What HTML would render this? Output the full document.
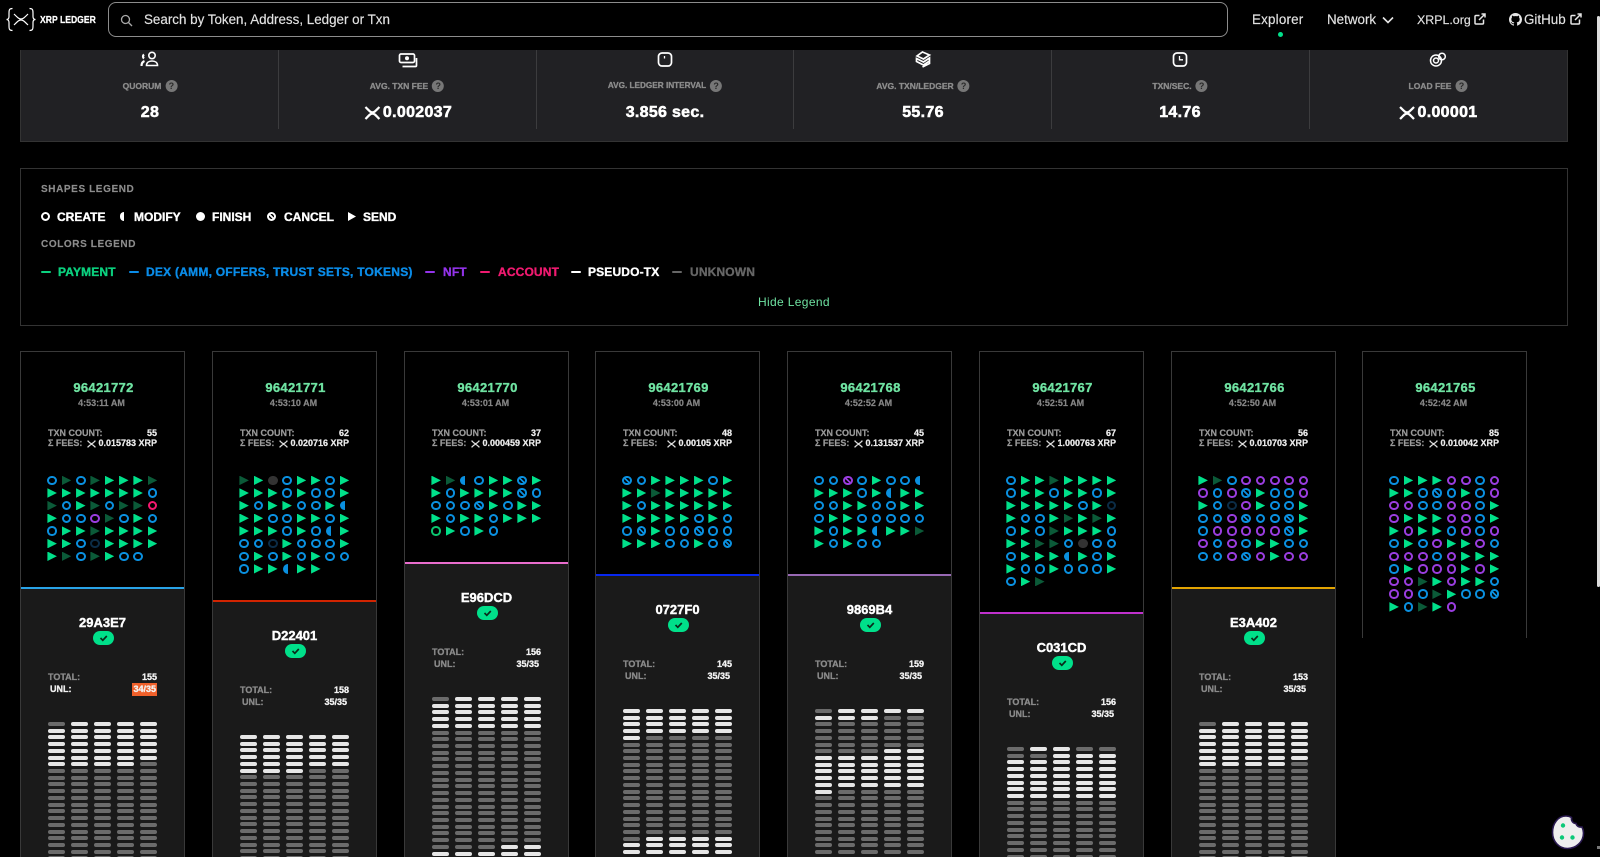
<!DOCTYPE html>
<html lang="en"><head><meta charset="utf-8"><title>XRP Ledger Explorer</title>
<style>
*{box-sizing:border-box}
html,body{margin:0;padding:0;background:#000;width:1600px;height:857px;overflow:hidden;font-family:"Liberation Sans",sans-serif;color:#fff}
#w{position:relative;width:1600px;height:857px;overflow:hidden;background:#000}
.a{position:absolute;white-space:nowrap}
#hd{position:absolute;left:0;top:0;width:1600px;height:50px;background:#000;z-index:3}
#sb{position:absolute;left:108px;top:2px;width:1120px;height:35px;border:1px solid #8c8c8c;border-radius:8px}
.nav{font-size:13.4px;line-height:16px;top:12px;color:#e2e2e2;-webkit-text-stroke:.15px #e2e2e2}
#st{position:absolute;left:20px;top:40px;width:1548px;height:102px;background:#212124;border:1px solid #333;border-top:0}
.sep{position:absolute;top:50px;width:1px;height:79px;background:#3c3c3e;z-index:1}
.lb{position:absolute;top:80px;height:12px;font-size:8.5px;font-weight:700;line-height:12px;color:#8c8c8c;display:flex;align-items:center;transform:translateX(-50%);-webkit-text-stroke:.3px #8c8c8c;white-space:nowrap}
.lb u{display:block;width:12px;height:12px;border-radius:50%;background:#777;margin-left:4px;text-decoration:none;color:#2a2a2a;font-size:9px;line-height:12px;text-align:center;-webkit-text-stroke:0}
.v{position:absolute;top:104px;height:18px;font-size:16px;line-height:18px;font-weight:700;letter-spacing:.3px;transform:translateX(-50%);display:flex;align-items:center;-webkit-text-stroke:.55px #fff;white-space:nowrap}
.v svg{margin-right:2px}
.ic{position:absolute;transform:translateX(-50%)}
#lg{position:absolute;left:20px;top:168px;width:1548px;height:158px;border:1px solid #333}
.lh{font-size:10px;line-height:12px;font-weight:700;color:#8c8c8c;letter-spacing:.6px;left:41px;-webkit-text-stroke:.15px #8c8c8c}
.lt{font-size:12px;line-height:14px;font-weight:700;-webkit-text-stroke:.35px;top:210px;color:#fff}
.lc{top:265px;letter-spacing:.15px}
.ds{position:absolute;top:271px;width:10px;height:2px;border-radius:1px}
.card{position:absolute;top:351px;width:165px;height:506px;border:1px solid #393939;border-bottom:0}
.num{position:absolute;left:2px;right:0;top:29px;text-align:center;font-size:13px;line-height:14px;font-weight:700;letter-spacing:.3px;color:#6fe3a2;-webkit-text-stroke:.35px #6fe3a2}
.tm{position:absolute;left:0;right:2px;top:45px;text-align:center;font-size:9px;line-height:12px;font-weight:700;color:#858585;-webkit-text-stroke:.2px #858585}
.k1,.k2,.r1,.r2{position:absolute;font-size:9px;line-height:11px;font-weight:700;-webkit-text-stroke:.2px}
.k1,.k2{left:27px;color:#9a9a9a}.r1,.r2{right:27px;color:#ececec;display:flex;align-items:center}
.k1,.r1{top:76px}.k2,.r2{top:86px}
.r2 svg{margin-right:2px}
.S{position:absolute;left:24px;top:122px;display:grid;grid-template-columns:repeat(8,14.33px);grid-auto-rows:12.67px;align-items:center}
.bot{position:absolute;left:0;right:0;bottom:0;background:#1a1a1a;border-top:2px solid;overflow:hidden}
.hs{position:absolute;left:0;right:0;top:26px;text-align:center;font-size:13px;line-height:15px;font-weight:700;-webkit-text-stroke:.4px #fff}
.ok{position:absolute;left:72px;top:42px;width:21px;height:14px;border-radius:7px;background:#00e08a}
.t1,.t2,.w1,.w2{position:absolute;font-size:9px;line-height:12px;font-weight:700;-webkit-text-stroke:.3px}
.t1,.t2{color:#8a8a8a}.w1,.w2{color:#f2f2f2}
.t1{left:27px;top:82px}.w1{right:27px;top:82px}
.t2{left:29px;top:94px}.w2{right:29px;top:94px}
.B{position:absolute;left:27px;display:grid;grid-template-columns:repeat(5,17px);column-gap:6.1px;row-gap:2.73px;grid-auto-rows:4px}
hr{all:unset;display:block}
.B hr{background:#6b6b6b;border-radius:2px}
.B hr.w{background:#e6e6e6}
.S hr{width:9.5px;height:9.5px;justify-self:center;box-sizing:border-box}
.b,.n,.p,.r,.e,.c,.x{border:2px solid;border-radius:50%}
.b,.c{border-color:#0a90e0}.n{border-color:#0b2c46}.p{border-color:#9a3ddf}.r{border-color:#f5186e}.e{border-color:#0bc56f}.x{border-color:#9a3ddf}
.c{background:linear-gradient(45deg,transparent 38%,#0a90e0 38% 62%,transparent 62%)}
.x{background:linear-gradient(45deg,transparent 38%,#9a3ddf 38% 62%,transparent 62%)}
.S hr.g,.S hr.d{clip-path:polygon(0 0,100% 50%,0 100%)}
.g{background:#00e08a}.d{background:#0b5a38}
.S hr.m{width:5px;border-radius:5px 0 0 5px;background:#0a90e0;transform:translateX(-2px)}
.S hr.k{background:#333;border-radius:50%}
.L{position:absolute;background:#fff}
</style></head><body><div id="w">
<svg width="0" height="0" style="position:absolute"><defs>
<symbol id="xr" viewBox="0 0 16 14"><path d="M1 1C5 5 6 6.4 8 6.4S11 5 15 1M1 13C5 9 6 7.6 8 7.6S11 9 15 13" fill="none" stroke="currentColor" stroke-width="2.2"/></symbol>
<symbol id="ex" viewBox="0 0 12 12"><path d="M5.500 2.500H2a1 1 0 0 0-1 1V10a1 1 0 0 0 1 1h6.500a1 1 0 0 0 1-1V6.500M5 7l6-6M7.500 1H11v3.500" fill="none" stroke="#e6e6e6" stroke-width="1.500"/></symbol>
</defs></svg>

<div id="hd">
<svg class="a" style="left:5px;top:7px" width="32" height="25" viewBox="0 0 32 25" fill="none" stroke="#fff" stroke-width="1.200"><path d="M7.500 1.500C4 1.500 4 3.500 4 6V9.500C4 11.500 3 12.500 1.500 12.500C3 12.500 4 13.500 4 15.500V19C4 21.500 4 23.500 7.500 23.500M24.500 1.500C28 1.500 28 3.500 28 6V9.500C28 11.500 29 12.500 30.500 12.500C29 12.500 28 13.500 28 15.500V19C28 21.500 28 23.500 24.500 23.500"/><path d="M9 7C13 11 14 12 16 12S19 11 23 7M9 18C13 14 14 13 16 13S19 14 23 18"/></svg>
<div class="a" style="left:40px;top:14px;font-size:10.5px;line-height:12px;font-weight:700;transform:scaleX(.82);transform-origin:left;-webkit-text-stroke:.25px #fff">XRP LEDGER</div>
<div id="sb"></div>
<svg class="a" style="left:120px;top:14px" width="13" height="13" viewBox="0 0 13 13" fill="none" stroke="#a8a8a8" stroke-width="1.300"><circle cx="5.500" cy="5.500" r="4"/><path d="M8.500 8.500L12 12"/></svg>
<div class="a" style="left:144px;top:12px;font-size:13.4px;line-height:16px;color:#e2e2e2;-webkit-text-stroke:.15px #e2e2e2">Search by Token, Address, Ledger or Txn</div>
<div class="a nav" style="left:1252px;letter-spacing:.2px">Explorer</div>
<div class="a" style="left:1278px;top:32px;width:5px;height:5px;border-radius:50%;background:#00e08a"></div>
<div class="a nav" style="left:1327px">Network</div>
<svg class="a" style="left:1382px;top:16px" width="12" height="8" viewBox="0 0 12 8" fill="none" stroke="#e6e6e6" stroke-width="1.600"><path d="M1 1.500l5 5 5-5"/></svg>
<div class="a nav" style="left:1417px;font-size:12.4px">XRPL.org</div>
<svg class="a" style="left:1474px;top:13px" width="12" height="12"><use href="#ex"/></svg>
<svg class="a" style="left:1509px;top:13px" width="13" height="13" viewBox="0 0 16 16" fill="#e6e6e6"><path d="M8 0C3.58 0 0 3.58 0 8c0 3.54 2.29 6.53 5.47 7.59.4.07.55-.17.55-.38 0-.19-.01-.82-.01-1.49-2.01.37-2.53-.49-2.69-.94-.09-.23-.48-.94-.82-1.13-.28-.15-.68-.52-.01-.53.63-.01 1.08.58 1.23.82.72 1.21 1.87.87 2.33.66.07-.52.28-.87.51-1.07-1.78-.2-3.64-.89-3.64-3.95 0-.87.31-1.59.82-2.15-.08-.2-.36-1.02.08-2.12 0 0 .67-.21 2.2.82.64-.18 1.32-.27 2-.27.68 0 1.36.09 2 .27 1.53-1.04 2.2-.82 2.2-.82.44 1.1.16 1.92.08 2.12.51.56.82 1.27.82 2.15 0 3.07-1.87 3.75-3.65 3.95.29.25.54.73.54 1.48 0 1.07-.01 1.93-.01 2.2 0 .21.15.46.55.38A8.013 8.013 0 0016 8c0-4.42-3.58-8-8-8z"/></svg>
<div class="a nav" style="left:1524px">GitHub</div>
<svg class="a" style="left:1570px;top:13px" width="12" height="12"><use href="#ex"/></svg>
</div>
<div class="a" style="left:1597px;top:16px;width:3px;height:571px;background:#ddd;border-radius:2px;z-index:4"></div>

<div id="st"></div>
<div class="sep" style="left:278px"></div><div class="sep" style="left:536px"></div><div class="sep" style="left:793px"></div><div class="sep" style="left:1051px"></div><div class="sep" style="left:1309px"></div>

<svg class="ic" style="left:150px;top:51px" width="19" height="16" viewBox="0 0 19 16" fill="#fff" stroke="#fff" stroke-width="1.600"><circle cx="11.500" cy="4.500" r="3.200" fill="none"/><path d="M6 14.500c0-3 2.500-4.500 5.500-4.500s5.500 1.500 5.500 4.500z" fill="none"/><path d="M1 15c0-2.500 1-4.200 3-5M3.500 7.500a2.500 2.500 0 0 1 0-4" fill="none" stroke-width="2.200"/></svg>
<svg class="ic" style="left:408px;top:53px" width="19" height="15" viewBox="0 0 19 15" fill="none" stroke="#fff" stroke-width="1.700"><rect x="1" y="1" width="15" height="8.500" rx="1.500"/><circle cx="8.500" cy="5.200" r="2" fill="#fff" stroke="none"/><path d="M18 5v7.500a1 1 0 0 1-1 1H4"/></svg>
<svg class="ic" style="left:665px;top:52px" width="16" height="15" viewBox="0 0 16 15" fill="none" stroke="#fff" stroke-width="1.700"><rect x="1.500" y="1" width="13" height="13" rx="3.500"/><path d="M7.500 4v2.500" stroke-width="1.300"/></svg>
<svg class="ic" style="left:923px;top:51px" width="17" height="17" viewBox="0 0 17 17" fill="none" stroke="#fff" stroke-width="1.700"><path d="M8 1L15 4 9 8 2.500 5zM2 7.500L9 11 15 7v3l-6 4-7-3.500zM8 16l7-3.500V10"/></svg>
<svg class="ic" style="left:1180px;top:52px" width="16" height="15" viewBox="0 0 16 15" fill="none" stroke="#fff" stroke-width="1.700"><rect x="1.500" y="1" width="13" height="13" rx="3.500"/><path d="M7.500 4v3.800H11" stroke-width="1.300"/></svg>
<svg class="ic" style="left:1438px;top:52px" width="17" height="15" viewBox="0 0 17 15" fill="none" stroke="#fff" stroke-width="1.500"><circle cx="6.500" cy="8.500" r="5.500"/><circle cx="6.500" cy="8.500" r="2.500"/><circle cx="12.500" cy="4.500" r="3.300"/></svg>

<div class="lb" style="left:150px">QUORUM<u>?</u></div>
<div class="lb" style="left:407px">AVG. TXN FEE<u>?</u></div>
<div class="lb" style="left:665px;font-size:8.2px">AVG. LEDGER INTERVAL<u>?</u></div>
<div class="lb" style="left:923px">AVG. TXN/LEDGER<u>?</u></div>
<div class="lb" style="left:1180px">TXN/SEC.<u>?</u></div>
<div class="lb" style="left:1438px">LOAD FEE<u>?</u></div>
<div class="v" style="left:150px">28</div>
<div class="v" style="left:408px"><svg width="17" height="14" color="#fff"><use href="#xr"/></svg>0.002037</div>
<div class="v" style="left:665px">3.856 sec.</div>
<div class="v" style="left:923px">55.76</div>
<div class="v" style="left:1180px">14.76</div>
<div class="v" style="left:1438px"><svg width="17" height="14" color="#fff"><use href="#xr"/></svg>0.00001</div>

<div id="lg"></div>
<div class="a lh" style="top:184px">SHAPES LEGEND</div>
<div class="L" style="left:41px;top:212px;width:9px;height:9px;border:2px solid #fff;border-radius:50%;background:none"></div>
<div class="a lt" style="left:57px">CREATE</div>
<div class="L" style="left:120px;top:212px;width:4px;height:9px;border-radius:4px 0 0 4px"></div>
<div class="a lt" style="left:134px">MODIFY</div>
<div class="L" style="left:196px;top:212px;width:9px;height:9px;border-radius:50%"></div>
<div class="a lt" style="left:212px">FINISH</div>
<div class="L" style="left:267px;top:212px;width:9px;height:9px;border:2px solid #fff;border-radius:50%;background:linear-gradient(45deg,transparent 38%,#fff 38% 62%,transparent 62%)"></div>
<div class="a lt" style="left:284px">CANCEL</div>
<div class="L" style="left:348px;top:212px;width:8px;height:9px;clip-path:polygon(0 0,100% 50%,0 100%)"></div>
<div class="a lt" style="left:363px">SEND</div>
<div class="a lh" style="top:239px">COLORS LEGEND</div>
<div class="ds" style="left:41px;background:#0bd17f"></div><div class="a lt lc" style="left:58px;color:#0bd17f">PAYMENT</div>
<div class="ds" style="left:129px;background:#0a8ce8"></div><div class="a lt lc" style="left:146px;color:#0a8ce8;letter-spacing:.24px">DEX (AMM, OFFERS, TRUST SETS, TOKENS)</div>
<div class="ds" style="left:425px;background:#9333ea"></div><div class="a lt lc" style="left:443px;color:#9333ea">NFT</div>
<div class="ds" style="left:480px;background:#f01a70"></div><div class="a lt lc" style="left:498px;color:#f01a70">ACCOUNT</div>
<div class="ds" style="left:571px;background:#fff"></div><div class="a lt lc" style="left:588px;color:#fff">PSEUDO-TX</div>
<div class="ds" style="left:672px;background:#666"></div><div class="a lt lc" style="left:690px;color:#666">UNKNOWN</div>
<div class="a" style="left:758px;top:295px;font-size:12px;line-height:14px;color:#6fe3a2;letter-spacing:.35px">Hide Legend</div>

<!-- CARD 1 -->
<div class="card" style="left:20px">
<div class="num">96421772</div><div class="tm">4:53:11 AM</div>
<div class="k1">TXN COUNT:</div><div class="r1">55</div><div class="k2">&Sigma; FEES:</div><div class="r2"><svg width="9" height="8" color="#ddd"><use href="#xr"/></svg>0.015783 XRP</div>
<div class="S">
<hr class=b><hr class=d><hr class=b><hr class=d><hr class=g><hr class=g><hr class=g><hr class=d>
<hr class=g><hr class=g><hr class=g><hr class=g><hr class=g><hr class=g><hr class=g><hr class=b>
<hr class=d><hr class=b><hr class=g><hr class=d><hr class=b><hr class=d><hr class=d><hr class=r>
<hr class=g><hr class=b><hr class=b><hr class=p><hr class=d><hr class=b><hr class=g><hr class=b>
<hr class=b><hr class=g><hr class=g><hr class=d><hr class=g><hr class=g><hr class=g><hr class=g>
<hr class=g><hr class=g><hr class=b><hr class=n><hr class=g><hr class=g><hr class=g><hr class=g>
<hr class=g><hr class=d><hr class=b><hr class=d><hr class=g><hr class=b><hr class=b>
</div>
<div class="bot" style="top:235px;border-color:#29A3E7">
<div class="hs">29A3E7</div>
<div class="ok"><svg width="21" height="14" fill="none" stroke-width="1.700"><path d="M7.500 7l2.300 2.300 4-4.300" stroke="#0a2a1a"/></svg></div>
<div class="t1">TOTAL:</div><div class="w1">155</div>
<div class="t2" style="color:#f2f2f2">UNL:</div><div class="w2" style="right:27px;background:#f0602a;padding:0 1px;height:13px">34/35</div>
<div class="B" style="top:133px">
<hr><hr class=w><hr class=w><hr class=w><hr class=w>
<hr class=w><hr class=w><hr class=w><hr class=w><hr class=w>
<hr class=w><hr class=w><hr class=w><hr class=w><hr class=w>
<hr class=w><hr class=w><hr class=w><hr class=w><hr class=w>
<hr class=w><hr class=w><hr class=w><hr class=w><hr class=w>
<hr class=w><hr class=w><hr class=w><hr class=w><hr class=w>
<hr class=w><hr class=w><hr class=w><hr class=w><hr>
<hr><hr><hr><hr><hr><hr><hr><hr><hr><hr><hr><hr><hr><hr><hr><hr><hr><hr><hr><hr><hr><hr><hr><hr><hr><hr><hr><hr><hr><hr><hr><hr><hr><hr><hr><hr><hr><hr><hr><hr><hr><hr><hr><hr><hr><hr><hr><hr><hr><hr><hr><hr><hr><hr><hr><hr><hr><hr><hr><hr><hr><hr><hr><hr><hr><hr><hr><hr><hr><hr>
</div></div></div>

<!-- CARD 2 -->
<div class="card" style="left:212px">
<div class="num">96421771</div><div class="tm">4:53:10 AM</div>
<div class="k1">TXN COUNT:</div><div class="r1">62</div><div class="k2">&Sigma; FEES:</div><div class="r2"><svg width="9" height="8" color="#ddd"><use href="#xr"/></svg>0.020716 XRP</div>
<div class="S">
<hr class=d><hr class=g><hr class=k><hr class=b><hr class=g><hr class=g><hr class=b><hr class=g>
<hr class=g><hr class=g><hr class=g><hr class=b><hr class=g><hr class=b><hr class=b><hr class=g>
<hr class=g><hr class=b><hr class=g><hr class=g><hr class=b><hr class=b><hr class=g><hr class=m>
<hr class=g><hr class=g><hr class=b><hr class=b><hr class=g><hr class=g><hr class=b><hr class=g>
<hr class=g><hr class=g><hr class=g><hr class=b><hr class=g><hr class=b><hr class=m><hr class=g>
<hr class=b><hr class=b><hr class=n><hr class=g><hr class=b><hr class=b><hr class=b><hr class=g>
<hr class=b><hr class=g><hr class=b><hr class=g><hr class=b><hr class=g><hr class=b><hr class=b>
<hr class=b><hr class=g><hr class=g><hr class=m><hr class=g><hr class=g>
</div>
<div class="bot" style="top:248px;border-color:#D22401">
<div class="hs">D22401</div>
<div class="ok"><svg width="21" height="14" fill="none" stroke-width="1.700"><path d="M7.500 7l2.300 2.300 4-4.300" stroke="#0a2a1a"/></svg></div>
<div class="t1">TOTAL:</div><div class="w1">158</div>
<div class="t2">UNL:</div><div class="w2">35/35</div>
<div class="B" style="top:133px">
<hr class=w><hr class=w><hr class=w><hr class=w><hr class=w>
<hr class=w><hr class=w><hr class=w><hr class=w><hr class=w>
<hr class=w><hr class=w><hr class=w><hr class=w><hr class=w>
<hr class=w><hr class=w><hr class=w><hr class=w><hr class=w>
<hr class=w><hr class=w><hr class=w><hr class=w><hr class=w>
<hr class=w><hr class=w><hr class=w><hr><hr>
<hr><hr><hr><hr><hr><hr><hr><hr><hr><hr><hr><hr><hr><hr><hr><hr><hr><hr><hr><hr><hr><hr><hr><hr><hr><hr><hr><hr><hr><hr><hr><hr><hr><hr><hr><hr><hr><hr><hr><hr><hr><hr><hr><hr><hr><hr><hr><hr><hr><hr><hr><hr><hr><hr><hr><hr><hr><hr><hr><hr><hr><hr><hr><hr><hr><hr><hr><hr><hr><hr>
</div></div></div>

<!-- CARD 3 -->
<div class="card" style="left:404px">
<div class="num">96421770</div><div class="tm">4:53:01 AM</div>
<div class="k1">TXN COUNT:</div><div class="r1">37</div><div class="k2">&Sigma; FEES:</div><div class="r2"><svg width="9" height="8" color="#ddd"><use href="#xr"/></svg>0.000459 XRP</div>
<div class="S">
<hr class=g><hr class=d><hr class=m><hr class=b><hr class=g><hr class=g><hr class=c><hr class=g>
<hr class=g><hr class=b><hr class=g><hr class=g><hr class=g><hr class=g><hr class=c><hr class=b>
<hr class=b><hr class=b><hr class=b><hr class=c><hr class=g><hr class=b><hr class=g><hr class=g>
<hr class=g><hr class=b><hr class=g><hr class=g><hr class=b><hr class=g><hr class=g><hr class=g>
<hr class=e><hr class=g><hr class=b><hr class=g><hr class=b>
</div>
<div class="bot" style="top:210px;border-color:#E96DCD">
<div class="hs">E96DCD</div>
<div class="ok"><svg width="21" height="14" fill="none" stroke-width="1.700"><path d="M7.500 7l2.300 2.300 4-4.300" stroke="#0a2a1a"/></svg></div>
<div class="t1">TOTAL:</div><div class="w1">156</div>
<div class="t2">UNL:</div><div class="w2">35/35</div>
<div class="B" style="top:133px">
<hr><hr class=w><hr class=w><hr class=w><hr class=w>
<hr class=w><hr class=w><hr class=w><hr class=w><hr class=w>
<hr class=w><hr class=w><hr class=w><hr class=w><hr class=w>
<hr class=w><hr class=w><hr class=w><hr class=w><hr class=w>
<hr class=w><hr class=w><hr class=w><hr class=w><hr class=w>
<hr><hr><hr><hr><hr><hr><hr><hr><hr><hr><hr><hr><hr><hr><hr><hr><hr><hr><hr><hr><hr><hr><hr><hr><hr>
<hr><hr><hr><hr><hr><hr><hr><hr><hr><hr><hr><hr><hr><hr><hr><hr><hr><hr><hr><hr><hr><hr><hr><hr><hr>
<hr><hr><hr><hr><hr><hr><hr><hr><hr><hr><hr><hr><hr><hr><hr>
<hr><hr><hr><hr><hr><hr><hr><hr><hr><hr>
<hr><hr><hr><hr><hr><hr><hr><hr><hr><hr>
<hr><hr><hr><hr class=w><hr class=w>
<hr class=w><hr class=w><hr class=w><hr class=w><hr class=w>
</div></div></div>

<!-- CARD 4 -->
<div class="card" style="left:595px">
<div class="num">96421769</div><div class="tm">4:53:00 AM</div>
<div class="k1">TXN COUNT:</div><div class="r1">48</div><div class="k2">&Sigma; FEES:</div><div class="r2"><svg width="9" height="8" color="#ddd"><use href="#xr"/></svg>0.00105 XRP</div>
<div class="S">
<hr class=c><hr class=b><hr class=g><hr class=g><hr class=g><hr class=g><hr class=b><hr class=g>
<hr class=g><hr class=g><hr class=d><hr class=g><hr class=g><hr class=g><hr class=g><hr class=g>
<hr class=g><hr class=b><hr class=g><hr class=g><hr class=g><hr class=g><hr class=g><hr class=g>
<hr class=g><hr class=g><hr class=g><hr class=g><hr class=g><hr class=b><hr class=g><hr class=b>
<hr class=b><hr class=c><hr class=g><hr class=b><hr class=b><hr class=c><hr class=b><hr class=b>
<hr class=g><hr class=g><hr class=g><hr class=b><hr class=b><hr class=g><hr class=b><hr class=c>
</div>
<div class="bot" style="top:222px;border-color:#0727F0">
<div class="hs">0727F0</div>
<div class="ok"><svg width="21" height="14" fill="none" stroke-width="1.700"><path d="M7.500 7l2.300 2.300 4-4.300" stroke="#0a2a1a"/></svg></div>
<div class="t1">TOTAL:</div><div class="w1">145</div>
<div class="t2">UNL:</div><div class="w2">35/35</div>
<div class="B" style="top:133px">
<hr class=w><hr class=w><hr class=w><hr class=w><hr class=w>
<hr class=w><hr class=w><hr class=w><hr class=w><hr class=w>
<hr class=w><hr class=w><hr class=w><hr class=w><hr class=w>
<hr class=w><hr class=w><hr class=w><hr class=w><hr class=w>
<hr class=w><hr><hr><hr><hr>
<hr><hr><hr><hr><hr><hr><hr><hr><hr><hr><hr><hr><hr><hr><hr><hr><hr><hr><hr><hr><hr><hr><hr><hr><hr>
<hr><hr><hr><hr><hr><hr><hr><hr><hr><hr><hr><hr><hr><hr><hr><hr><hr><hr><hr><hr><hr><hr><hr><hr><hr>
<hr><hr><hr><hr><hr><hr><hr><hr><hr><hr><hr><hr><hr><hr><hr><hr><hr><hr><hr><hr>
<hr><hr class=w><hr class=w><hr class=w><hr class=w>
<hr class=w><hr class=w><hr class=w><hr class=w><hr class=w>
<hr class=w><hr class=w><hr class=w><hr class=w><hr class=w>
</div></div></div>

<!-- CARD 5 -->
<div class="card" style="left:787px">
<div class="num">96421768</div><div class="tm">4:52:52 AM</div>
<div class="k1">TXN COUNT:</div><div class="r1">45</div><div class="k2">&Sigma; FEES:</div><div class="r2"><svg width="9" height="8" color="#ddd"><use href="#xr"/></svg>0.131537 XRP</div>
<div class="S">
<hr class=b><hr class=b><hr class=x><hr class=b><hr class=g><hr class=b><hr class=b><hr class=m>
<hr class=g><hr class=g><hr class=g><hr class=b><hr class=g><hr class=m><hr class=g><hr class=g>
<hr class=b><hr class=b><hr class=g><hr class=g><hr class=b><hr class=b><hr class=g><hr class=g>
<hr class=b><hr class=g><hr class=g><hr class=b><hr class=b><hr class=b><hr class=b><hr class=b>
<hr class=g><hr class=b><hr class=g><hr class=g><hr class=m><hr class=g><hr class=g><hr class=d>
<hr class=g><hr class=b><hr class=g><hr class=b><hr class=b>
</div>
<div class="bot" style="top:222px;border-color:#9869B4">
<div class="hs">9869B4</div>
<div class="ok"><svg width="21" height="14" fill="none" stroke-width="1.700"><path d="M7.500 7l2.300 2.300 4-4.300" stroke="#0a2a1a"/></svg></div>
<div class="t1">TOTAL:</div><div class="w1">159</div>
<div class="t2">UNL:</div><div class="w2">35/35</div>
<div class="B" style="top:133px">
<hr><hr class=w><hr class=w><hr class=w><hr class=w>
<hr class=w><hr class=w><hr class=w><hr><hr>
<hr><hr><hr><hr><hr><hr><hr><hr><hr><hr><hr><hr><hr><hr><hr><hr><hr><hr><hr><hr>
<hr><hr><hr><hr class=w><hr class=w>
<hr class=w><hr class=w><hr class=w><hr class=w><hr class=w>
<hr class=w><hr class=w><hr class=w><hr class=w><hr class=w>
<hr class=w><hr class=w><hr class=w><hr class=w><hr class=w>
<hr class=w><hr class=w><hr class=w><hr class=w><hr class=w>
<hr class=w><hr class=w><hr class=w><hr class=w><hr class=w>
<hr class=w><hr><hr><hr><hr>
<hr><hr><hr><hr><hr><hr><hr><hr><hr><hr><hr><hr><hr><hr><hr><hr><hr><hr><hr><hr><hr><hr><hr><hr><hr>
<hr><hr><hr><hr><hr><hr><hr><hr><hr><hr><hr><hr><hr><hr><hr><hr><hr><hr><hr><hr><hr><hr><hr><hr><hr>
</div></div></div>

<!-- CARD 6 -->
<div class="card" style="left:979px">
<div class="num">96421767</div><div class="tm">4:52:51 AM</div>
<div class="k1">TXN COUNT:</div><div class="r1">67</div><div class="k2">&Sigma; FEES:</div><div class="r2"><svg width="9" height="8" color="#ddd"><use href="#xr"/></svg>1.000763 XRP</div>
<div class="S">
<hr class=b><hr class=g><hr class=g><hr class=d><hr class=g><hr class=g><hr class=g><hr class=g>
<hr class=b><hr class=g><hr class=g><hr class=b><hr class=g><hr class=g><hr class=b><hr class=g>
<hr class=g><hr class=g><hr class=g><hr class=g><hr class=g><hr class=b><hr class=g><hr class=n>
<hr class=g><hr class=b><hr class=b><hr class=g><hr class=d><hr class=g><hr class=d><hr class=g>
<hr class=b><hr class=g><hr class=b><hr class=d><hr class=g><hr class=g><hr class=g><hr class=b>
<hr class=g><hr class=g><hr class=d><hr class=d><hr class=b><hr class=k><hr class=b><hr class=b>
<hr class=b><hr class=g><hr class=g><hr class=g><hr class=m><hr class=g><hr class=b><hr class=g>
<hr class=g><hr class=b><hr class=b><hr class=g><hr class=b><hr class=b><hr class=b><hr class=g>
<hr class=b><hr class=g><hr class=d>
</div>
<div class="bot" style="top:260px;border-color:#C031CD">
<div class="hs">C031CD</div>
<div class="ok"><svg width="21" height="14" fill="none" stroke-width="1.700"><path d="M7.500 7l2.300 2.300 4-4.300" stroke="#0a2a1a"/></svg></div>
<div class="t1">TOTAL:</div><div class="w1">156</div>
<div class="t2">UNL:</div><div class="w2">35/35</div>
<div class="B" style="top:133px">
<hr><hr class=w><hr class=w><hr><hr>
<hr><hr><hr class=w><hr class=w><hr class=w>
<hr class=w><hr class=w><hr class=w><hr class=w><hr class=w>
<hr class=w><hr class=w><hr class=w><hr class=w><hr class=w>
<hr class=w><hr class=w><hr class=w><hr class=w><hr class=w>
<hr class=w><hr class=w><hr class=w><hr class=w><hr class=w>
<hr class=w><hr class=w><hr class=w><hr class=w><hr class=w>
<hr class=w><hr class=w><hr class=w><hr class=w><hr class=w>
<hr><hr><hr><hr><hr><hr><hr><hr><hr><hr><hr><hr><hr><hr><hr><hr><hr><hr><hr><hr><hr><hr><hr><hr><hr>
<hr><hr><hr><hr><hr><hr><hr><hr><hr><hr><hr><hr><hr><hr><hr><hr><hr><hr><hr><hr>
</div></div></div>

<!-- CARD 7 -->
<div class="card" style="left:1171px">
<div class="num">96421766</div><div class="tm">4:52:50 AM</div>
<div class="k1">TXN COUNT:</div><div class="r1">56</div><div class="k2">&Sigma; FEES:</div><div class="r2"><svg width="9" height="8" color="#ddd"><use href="#xr"/></svg>0.010703 XRP</div>
<div class="S">
<hr class=g><hr class=d><hr class=b><hr class=p><hr class=p><hr class=p><hr class=p><hr class=p>
<hr class=p><hr class=b><hr class=p><hr class=c><hr class=g><hr class=b><hr class=b><hr class=p>
<hr class=g><hr class=b><hr class=n><hr class=p><hr class=g><hr class=b><hr class=b><hr class=g>
<hr class=b><hr class=b><hr class=p><hr class=c><hr class=b><hr class=b><hr class=c><hr class=g>
<hr class=b><hr class=p><hr class=p><hr class=p><hr class=p><hr class=p><hr class=c><hr class=g>
<hr class=p><hr class=b><hr class=p><hr class=b><hr class=g><hr class=g><hr class=b><hr class=b>
<hr class=b><hr class=b><hr class=p><hr class=c><hr class=p><hr class=g><hr class=p><hr class=p>
</div>
<div class="bot" style="top:235px;border-color:#E3A402">
<div class="hs">E3A402</div>
<div class="ok"><svg width="21" height="14" fill="none" stroke-width="1.700"><path d="M7.500 7l2.300 2.300 4-4.300" stroke="#0a2a1a"/></svg></div>
<div class="t1">TOTAL:</div><div class="w1">153</div>
<div class="t2">UNL:</div><div class="w2">35/35</div>
<div class="B" style="top:133px">
<hr><hr class=w><hr class=w><hr class=w><hr class=w>
<hr class=w><hr class=w><hr class=w><hr class=w><hr class=w>
<hr class=w><hr class=w><hr class=w><hr class=w><hr class=w>
<hr class=w><hr class=w><hr class=w><hr class=w><hr class=w>
<hr class=w><hr class=w><hr class=w><hr class=w><hr class=w>
<hr class=w><hr class=w><hr class=w><hr class=w><hr class=w>
<hr class=w><hr class=w><hr class=w><hr class=w><hr>
<hr><hr><hr><hr><hr><hr><hr><hr><hr><hr><hr><hr><hr><hr><hr><hr><hr><hr><hr><hr><hr><hr><hr><hr><hr><hr><hr><hr><hr><hr><hr><hr><hr><hr><hr><hr><hr><hr><hr><hr><hr><hr><hr><hr><hr><hr><hr><hr><hr><hr><hr><hr><hr><hr><hr><hr><hr><hr><hr><hr><hr><hr><hr><hr><hr><hr><hr><hr><hr><hr>
</div></div></div>

<!-- CARD 8 -->
<div class="card" style="left:1362px;height:287px">
<div class="num">96421765</div><div class="tm">4:52:42 AM</div>
<div class="k1">TXN COUNT:</div><div class="r1">85</div><div class="k2">&Sigma; FEES:</div><div class="r2"><svg width="9" height="8" color="#ddd"><use href="#xr"/></svg>0.010042 XRP</div>
<div class="S">
<hr class=b><hr class=g><hr class=g><hr class=g><hr class=p><hr class=p><hr class=b><hr class=p>
<hr class=g><hr class=g><hr class=b><hr class=c><hr class=b><hr class=g><hr class=b><hr class=p>
<hr class=p><hr class=p><hr class=b><hr class=b><hr class=p><hr class=p><hr class=b><hr class=g>
<hr class=p><hr class=g><hr class=g><hr class=g><hr class=p><hr class=p><hr class=b><hr class=g>
<hr class=g><hr class=p><hr class=g><hr class=g><hr class=b><hr class=p><hr class=b><hr class=p>
<hr class=b><hr class=g><hr class=b><hr class=p><hr class=g><hr class=g><hr class=p><hr class=b>
<hr class=p><hr class=p><hr class=p><hr class=b><hr class=p><hr class=g><hr class=g><hr class=g>
<hr class=b><hr class=g><hr class=p><hr class=p><hr class=p><hr class=g><hr class=p><hr class=g>
<hr class=p><hr class=p><hr class=d><hr class=g><hr class=p><hr class=g><hr class=g><hr class=b>
<hr class=p><hr class=p><hr class=b><hr class=d><hr class=g><hr class=b><hr class=b><hr class=c>
<hr class=g><hr class=b><hr class=d><hr class=g><hr class=p>
</div></div>

<!-- cookie -->
<svg class="a" style="left:1551px;top:814px;z-index:5" width="34" height="36" viewBox="0 0 34 36"><path d="M15 2C17 2 19 2.500 20.500 3.500C20 7 22 9.500 25 9.500C25.500 12 28 13.500 31 13C32 15 32.500 17 32.500 19C32.500 28 25 34.500 16.500 34.500C8 34.500 1.500 27.500 1.500 18.500C1.500 9.500 7 2 15 2Z" fill="#eee" stroke="#2a1a50" stroke-width="1.600"/><circle cx="12" cy="11.500" r="2.200" fill="#0bc878"/><circle cx="11" cy="23.500" r="2.200" fill="#0bc878"/><circle cx="21.500" cy="23.500" r="2.200" fill="#0bc878"/></svg>
<div class="a" style="left:1597px;top:846px;width:3px;height:3px;background:#777;z-index:4"></div>
</div></body></html>
